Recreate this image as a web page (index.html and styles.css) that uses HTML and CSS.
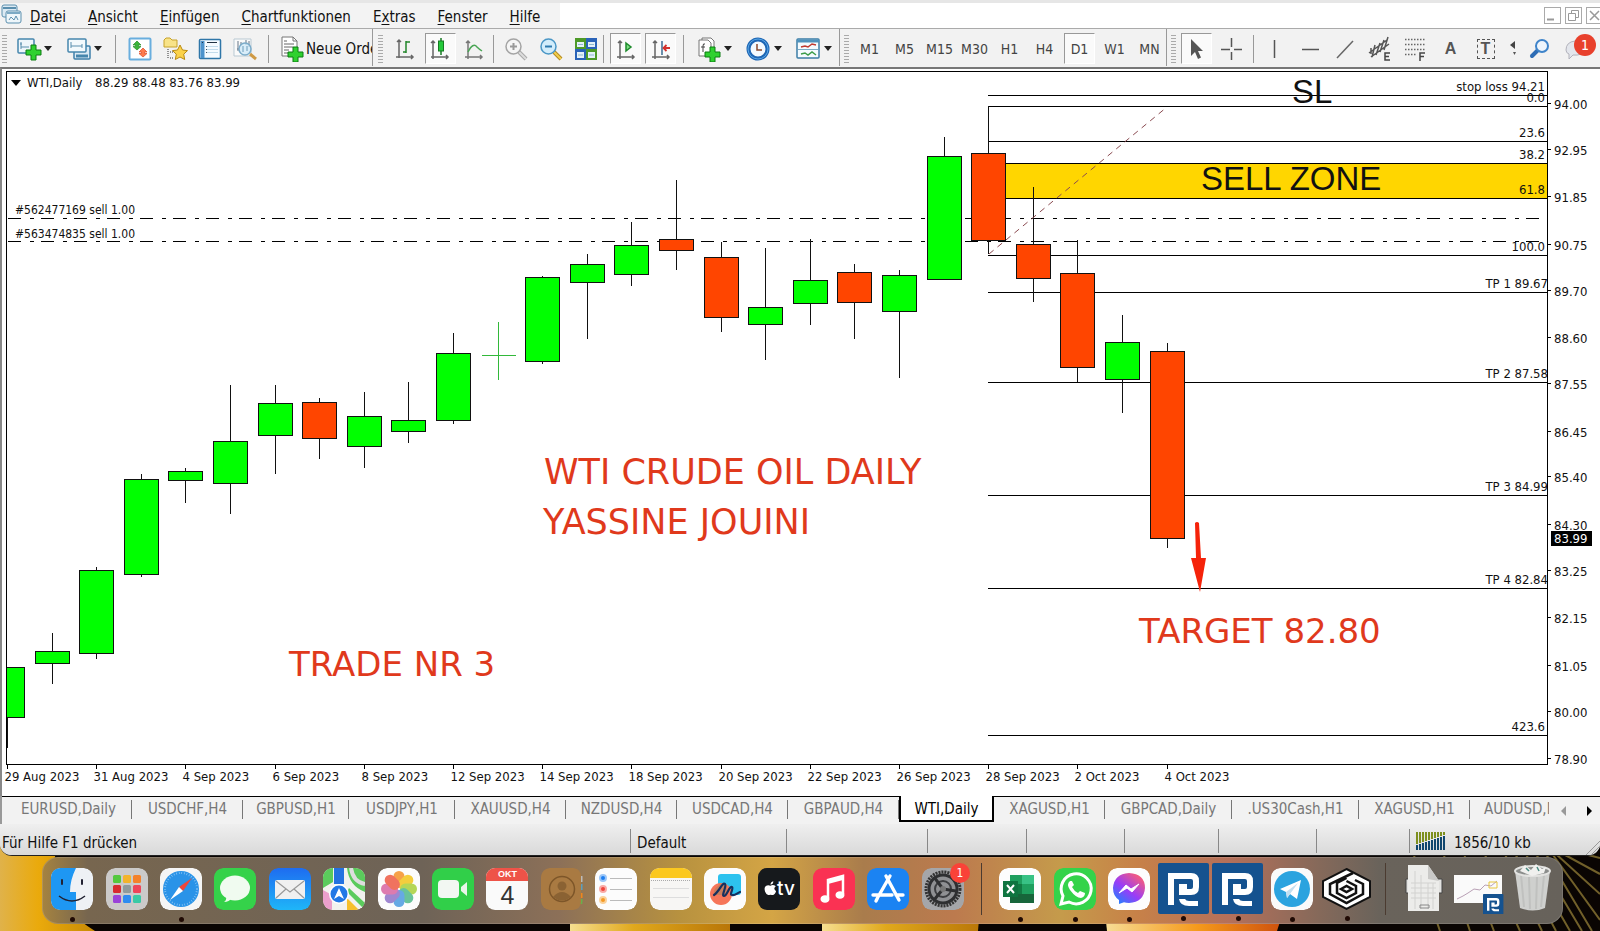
FILE: index.html
```html
<!DOCTYPE html>
<html lang="de">
<head>
  <meta charset="UTF-8" />
  <meta name="viewport" content="width=device-width, initial-scale=1.0"/>
  <title>WTI,Daily</title>
  <link rel="stylesheet" href="styles.css">
</head>
<body>

<div class="window">

  <!-- Menu -->
  <header class="menubar">
    <nav class="menu">
      <svg class="app-icon" width="22" height="22" viewBox="0 0 22 22"><rect x="2" y="1" width="15" height="12" rx="2" fill="#dceaf3" stroke="#5b8fae"/><path d="M3 4h13" stroke="#5b8fae" stroke-width="2"/><rect x="6" y="7" width="15" height="12" rx="2" fill="#eef6fa" stroke="#5b8fae"/><path d="M7 9h13" stroke="#7ba9c4" stroke-width="2"/><path d="M9 16l2-3 3 3 2-4 2 4" fill="none" stroke="#5b8fae"/></svg>
      <a href="#"><u>D</u>atei</a>
      <a href="#"><u>A</u>nsicht</a>
      <a href="#"><u>E</u>infügen</a>
      <a href="#"><u>C</u>hartfunktionen</a>
      <a href="#">E<u>x</u>tras</a>
      <a href="#"><u>F</u>enster</a>
      <a href="#"><u>H</u>ilfe</a>
    </nav>
    <div class="win-buttons">
      <button aria-label="Minimieren"><svg width="17" height="17"><path d="M3 12.500h7" stroke="#999" stroke-width="2"/></svg></button>
      <button aria-label="Wiederherstellen"><svg width="17" height="17" fill="none" stroke="#999"><path d="M3.500 6.500h7v7h-7zM6.500 6V3.500h7v7H11"/></svg></button>
      <button aria-label="Schließen"><svg width="17" height="17"><path d="M4 4l9 9M13 4l-9 9" stroke="#999" stroke-width="1.500"/></svg></button>
    </div>
  </header>

  <!-- Toolbars -->
  <div class="toolbar">
    <div class="group group-standard">
      <i class="grip"></i>
      <button class="tool drop" aria-label="Neuer Chart"><svg width="26" height="24" viewBox="0 0 26 24"><rect x="2" y="2" width="16" height="14" rx="1" fill="#eef6fb" stroke="#4686ad" stroke-width="1.500"/><path d="M5 5v7M4 7h2M5 10h8" stroke="#5b8fae"/><path d="M15 8h5v5h5v5h-5v5h-5v-5h-5v-5h5z" fill="#2fd12f" stroke="#0d7d12"/></svg></button>
      <button class="tool drop" aria-label="Profile"><svg width="26" height="24" viewBox="0 0 26 24"><rect x="8" y="9" width="16" height="13" rx="1" fill="#dbeaf5" stroke="#3f80aa" stroke-width="1.500"/><path d="M10 19h12" stroke="#4686ad" stroke-width="3"/><rect x="2" y="2" width="18" height="13" rx="1" fill="#f4fafd" stroke="#4686ad" stroke-width="1.500"/><path d="M5 5v6M5 9h11M16 7v4" stroke="#5b8fae"/></svg></button>
      <i class="sep"></i>
      <button class="tool" aria-label="Marktübersicht"><svg width="24" height="24" viewBox="0 0 24 24"><rect x="1.500" y="1.500" width="21" height="21" rx="1" fill="#fff" stroke="#69aede" stroke-width="2"/><path d="M9 4l4 4h-2.500v1.500H13l-4 3.500-4-3.500h2.500V8H5z" fill="#3bb53b" stroke="#2b8d2b" stroke-width=".7"/><path d="M15 11l4 4h-2.500v1.500H19L15 20l-4-3.500h2.500V15H11z" fill="#ff7b4c" stroke="#dd4a26" stroke-width=".7"/></svg></button>
      <button class="tool" aria-label="Navigator"><svg width="26" height="24" viewBox="0 0 26 24"><path d="M2 3l2-2h4l2 2h5v7H2z" fill="#f8e388" stroke="#c7a22a"/><path d="M6 12v10M8 15h4M8 21h3" stroke="#333" stroke-dasharray="1 1"/><path d="M18 8l2.500 5 5 .6-3.800 3.600 1 5.300L18 20l-4.700 2.500 1-5.300-3.800-3.600 5-.6z" fill="#fbd24a" stroke="#b98a12"/></svg></button>
      <button class="tool" aria-label="Datenfenster"><svg width="24" height="24" viewBox="0 0 24 24"><rect x="1.500" y="2.500" width="21" height="19" rx="1" fill="#f6fbff" stroke="#2f76a8" stroke-width="1.500"/><path d="M4.500 4v17" stroke="#4d93cc" stroke-width="4"/><path d="M4 5.500h1M9 5.500h10" stroke="#234"/><path d="M9 9.500h11M9 12.500h11M9 15.500h11" stroke="#c3dcec"/><path d="M8.500 9v8" stroke="#456" stroke-dasharray="1 2"/></svg></button>
      <button class="tool" aria-label="Strategietester"><svg width="26" height="24" viewBox="0 0 26 24"><path d="M2 2h17v17H2z" fill="#fafafa" stroke="#b9c9d3"/><path d="M6 4v10M9 5v4M14 3v5M17 4v6M5 12h2" stroke="#678"/><path d="M18 17l6 5" stroke="#cf9a45" stroke-width="3"/><circle cx="13" cy="12" r="6" fill="#cde8f8bb" stroke="#7cacca" stroke-width="1.500"/><path d="M11 9v6M15 9v5" stroke="#6d9cba"/></svg></button>
      <i class="sep"></i>
      <button class="tool order"><svg width="26" height="26" viewBox="0 0 26 26"><path d="M3 1h11l4 4v15H3z" fill="#fff" stroke="#777"/><path d="M5 5h3M5 8h10M5 11h9M5 14h5M5 17h5" stroke="#666"/><path d="M14 1v4h4" fill="none" stroke="#777"/><path d="M14 11h5v5h5v5h-5v5h-5v-5H9v-5h5z" fill="#2fd12f" stroke="#0d7d12"/></svg>Neue Order</button>
    </div>

    <div class="group group-charts">
      <i class="grip"></i>
      <button class="tool" aria-label="Balkenchart"><svg width="24" height="24" viewBox="0 0 24 24"><path d="M5 3v18M2 20h17M3 5l2-2 2 2M17 18l2 2-2 2" fill="none" stroke="#666" stroke-width="1.500"/><path d="M12 4v12M12 5h4M9 15h3" stroke="#23862b" stroke-width="1.500" fill="none"/></svg></button>
      <button class="tool pressed" aria-label="Kerzenchart"><svg width="24" height="24" viewBox="0 0 24 24"><path d="M4 4v18M2 20h17M2 6l2-2 2 2M17 18l2 2-2 2" fill="none" stroke="#666" stroke-width="1.500"/><path d="M12 1v17" stroke="#167a22" stroke-width="1.500"/><rect x="9.500" y="4" width="5" height="10" fill="#24c93a" stroke="#167a22"/></svg></button>
      <button class="tool" aria-label="Linienchart"><svg width="24" height="24" viewBox="0 0 24 24"><path d="M4 4v18M1 20h17M2 6l2-2 2 2M16 18l2 2-2 2" fill="none" stroke="#777" stroke-width="1.500"/><path d="M4 15q5-10 9-5 2 2 5 4" fill="none" stroke="#49a554" stroke-width="1.500"/></svg></button>
      <i class="sep thin"></i>
      <button class="tool" aria-label="Vergrößern"><svg width="24" height="24" viewBox="0 0 24 24"><path d="M15 15l7 7" stroke="#aaa" stroke-width="4"/><path d="M15 15l7 7" stroke="#ddd" stroke-width="2"/><circle cx="9.500" cy="9.500" r="7.500" fill="#f5f5f5" stroke="#a4a4a4" stroke-width="1.500"/><path d="M9.500 6v7M6 9.500h7" stroke="#999" stroke-width="2"/></svg></button>
      <button class="tool" aria-label="Verkleinern"><svg width="24" height="24" viewBox="0 0 24 24"><path d="M15 15l7 7" stroke="#b58a20" stroke-width="4"/><path d="M15 15l7 7" stroke="#f3cf4c" stroke-width="2"/><circle cx="9.500" cy="9.500" r="7.500" fill="#d3edfb" stroke="#4b97c6" stroke-width="1.500"/><path d="M6 9.500h7" stroke="#2f7aae" stroke-width="2"/></svg></button>
      <button class="tool" aria-label="Fenster anordnen"><svg width="24" height="24" viewBox="0 0 24 24"><path d="M1 1h11v11H1z" fill="#4d9a28"/><path d="M12 1h11v11H12z" fill="#2a63b8"/><path d="M1 12h11v11H1z" fill="#2a63b8"/><path d="M12 12h11v11H12z" fill="#4d9a28"/><path d="M3 5h7v5H3zM14 5h7v5h-7zM3 15h7v6H3zM14 15h7v6h-7z" fill="#e4f1f8"/><path d="M4 7.500h5M15 7.500h5M4 18h5M15 18h5" stroke="#8fb9cf"/></svg></button>
      <i class="sep thin"></i>
      <button class="tool pressed" aria-label="Auto-Bildlauf"><svg width="24" height="24" viewBox="0 0 24 24"><path d="M6 4v18M3 20h17M4 6l2-2 2 2M18 18l2 2-2 2" fill="none" stroke="#666" stroke-width="1.500"/><path d="M12 6l5 4-5 4z" fill="#7ddf83" stroke="#1d8a2b" stroke-width="1.500"/></svg></button>
      <button class="tool pressed" aria-label="Chartverschiebung"><svg width="24" height="24" viewBox="0 0 24 24"><path d="M6 4v18M3 20h17M4 6l2-2 2 2M18 18l2 2-2 2" fill="none" stroke="#666" stroke-width="1.500"/><path d="M13 4v14" stroke="#3a6a90" stroke-width="1.500"/><path d="M14 11h7M17.500 8L14.500 11l3 3" fill="none" stroke="#d3302b" stroke-width="1.800"/></svg></button>
      <i class="sep wide"></i>
      <button class="tool drop" aria-label="Indikatoren"><svg width="26" height="26" viewBox="0 0 26 26"><path d="M6 2h9l3 3v13H6z" fill="#fff" stroke="#777"/><path d="M3 4h9l3 3v13H3z" fill="#fff" stroke="#777"/><path d="M9 8q-2-1-2 2v6M5 11h4" fill="none" stroke="#444"/><path d="M14 11h5v5h5v5h-5v5h-5v-5H9v-5h5z" fill="#2fd12f" stroke="#0d7d12"/></svg></button>
      <button class="tool drop" aria-label="Zeitrahmen"><svg width="26" height="26" viewBox="0 0 26 26"><circle cx="12" cy="13" r="9.500" fill="#f4fafe" stroke="#1f67b5" stroke-width="4"/><circle cx="12" cy="13" r="10" fill="none" stroke="#5aa8e6"/><path d="M11 8v6h5" fill="none" stroke="#8a4a2d" stroke-width="1.500"/></svg></button>
      <button class="tool drop" aria-label="Vorlagen"><svg width="26" height="24" viewBox="0 0 26 24"><rect x="1" y="2" width="22" height="19" rx="1" fill="#f4fbff" stroke="#3c7ea7" stroke-width="1.500"/><path d="M1 4h22" stroke="#4f92bd" stroke-width="3"/><path d="M5 10l4-1 3 1 4-3 4 1" fill="none" stroke="#c03a30" stroke-width="1.500"/><path d="M2 12.500h20" stroke="#7bacc7"/><path d="M5 17l4-1 3 2 4-3 4 3" fill="none" stroke="#3d9d4a" stroke-width="1.500"/></svg></button>
    </div>

    <div class="group group-periods">
      <i class="grip"></i>
      <button class="tool">M1</button>
      <button class="tool">M5</button>
      <button class="tool">M15</button>
      <button class="tool">M30</button>
      <button class="tool">H1</button>
      <button class="tool">H4</button>
      <button class="tool pressed">D1</button>
      <button class="tool">W1</button>
      <button class="tool">MN</button>
    </div>

    <div class="group group-lines">
      <i class="grip"></i>
      <button class="tool pressed" aria-label="Cursor"><svg width="24" height="24" viewBox="0 0 24 24"><path d="M6 2v17l4-4 3 7 3-1.500-3-6.500h5z" fill="#555"/></svg></button>
      <button class="tool" aria-label="Fadenkreuz"><svg width="24" height="24" viewBox="0 0 24 24"><path d="M11.500 1v9M11.500 15v8M1 12.500h9M14 12.500h8" stroke="#555" stroke-width="1.500"/></svg></button>
      <i class="sep"></i>
      <button class="tool" aria-label="Vertikale Linie"><svg width="24" height="24" viewBox="0 0 24 24"><path d="M10.500 3v18" stroke="#555" stroke-width="1.500"/></svg></button>
      <button class="tool" aria-label="Horizontale Linie"><svg width="24" height="24" viewBox="0 0 24 24"><path d="M3 12.500h17" stroke="#555" stroke-width="1.500"/></svg></button>
      <button class="tool" aria-label="Trendlinie"><svg width="24" height="24" viewBox="0 0 24 24"><path d="M3 21L19 4" stroke="#666" stroke-width="1.500"/></svg></button>
      <button class="tool" aria-label="Kanal"><svg width="26" height="26" viewBox="0 0 26 26"><path d="M1 17L19 4M3 21L21 8M3 12v6M7 9l-3 12M12 7L8 19M16 4l-4 12M20 1l-4 13" stroke="#555" stroke-width="1.500"/><path d="M22 17h-5v7h5M17 20.500h4" fill="none" stroke="#444" stroke-width="1.500"/></svg></button>
      <button class="tool" aria-label="Fibonacci"><svg width="26" height="26" viewBox="0 0 26 26"><path d="M2 3.500h20M2 8.500h20M2 13.500h20M2 18.500h12" stroke="#666" stroke-width="1.500" stroke-dasharray="1.500 1.500"/><path d="M22 17h-5v8M17 20.500h4" fill="none" stroke="#444" stroke-width="1.500"/></svg></button>
      <button class="tool letter">A</button>
      <button class="tool letter boxed"><span>T</span></button>
      <button class="tool tiny" aria-label="Pfeile"><svg width="10" height="16" viewBox="0 0 10 16"><path d="M7 0v8L2 4z" fill="#444"/><path d="M5 11h3l-1.500 3z" fill="#555"/></svg></button>
      <button class="tool" aria-label="Suche"><svg width="24" height="24" viewBox="0 0 24 24"><path d="M9 13l-6 6" stroke="#2e6db5" stroke-width="4" stroke-linecap="round"/><circle cx="13" cy="9" r="6" fill="#eef5fc" stroke="#3f84ca" stroke-width="2"/></svg></button>
      <button class="tool alert" aria-label="Mitteilungen"><svg width="24" height="24" viewBox="0 0 24 24"><path d="M2 13q0-8 9-9 8 1 10 9-3 6-12 5l-4 4v-5q-3-1-3-4z" fill="#e3e6ec" stroke="#b2b2bb"/></svg><span class="badge">1</span></button>
    </div>
  </div>

  <!-- Chart -->
  <main class="chart">
    <svg id="chart" viewBox="0 69 1600 727">
      <g id="zone"></g>
      <g id="levels"></g>
      <g id="candles"></g>
      <path class="trend" d="M989 254L1167 107"/>
      <g class="frame">
        <path d="M6.500 764.500V71.500H1547.500V764.500Z"/>
      </g>
      <g id="axis"></g>

      <path d="M11 80h10l-5 6z"/>
      <text x="27" y="87">WTI,Daily</text>
      <text x="95" y="87">88.29 88.48 83.76 83.99</text>
      <text class="order-label" x="15" y="214">#562477169 sell 1.00</text>
      <text class="order-label" x="15" y="238">#563474835 sell 1.00</text>

      <text class="label" x="1292" y="103">SL</text>
      <text class="label" x="1201" y="190">SELL ZONE</text>

      <g class="note">
        <text x="544" y="484">WTI CRUDE OIL DAILY</text>
        <text x="543" y="534">YASSINE JOUINI</text>
        <text class="small" x="289" y="676">TRADE NR 3</text>
        <text class="small" x="1139" y="643">TARGET 82.80</text>
        <path d="M1195 523q2-2 4 0l2 35h5l-6 34-9-34h5z"/>
      </g>
    </svg>
  </main>

  <!-- Chart tabs -->
  <nav class="tabs">
    <div class="tab-list">
      <a href="#" class="l">EURUSD,Daily</a>
      <a href="#">USDCHF,H4</a>
      <a href="#" class="s">GBPUSD,H1</a>
      <a href="#" class="s">USDJPY,H1</a>
      <a href="#">XAUUSD,H4</a>
      <a href="#">NZDUSD,H4</a>
      <a href="#">USDCAD,H4</a>
      <a href="#">GBPAUD,H4</a>
      <a href="#" class="active">WTI,Daily</a>
      <a href="#">XAGUSD,H1</a>
      <a href="#" class="l">GBPCAD,Daily</a>
      <a href="#" class="l">.US30Cash,H1</a>
      <a href="#">XAGUSD,H1</a>
      <a href="#" class="last">AUDUSD,M</a>
    </div>
    <button class="scroll off" aria-label="Zurück"></button>
    <button class="scroll" aria-label="Weiter"></button>
  </nav>

  <!-- Status bar -->
  <footer class="status">
    <span>Für Hilfe F1 drücken</span>
    <span>Default</span>
    <span></span><span></span><span></span><span></span><span></span><span></span>
    <span class="traffic"><svg id="bars" width="32" height="20"></svg>1856/10 kb</span>
    <svg class="resize" width="14" height="14"><path d="M0 14L14 0M5 14l9-9M10 14l4-4" stroke="#999"/></svg>
  </footer>
</div>

<!-- Desktop with dock -->
<div class="desktop">
  <svg class="wallpaper" viewBox="0 0 1600 87" preserveAspectRatio="none">
    <defs>
      <linearGradient id="gold"><stop offset="0" stop-color="#f6df90"/><stop offset=".4" stop-color="#e0a81c"/><stop offset="1" stop-color="#b97608"/></linearGradient>
      <linearGradient id="fire"><stop offset="0" stop-color="#f7df9a"/><stop offset=".5" stop-color="#f59a1c"/><stop offset="1" stop-color="#c9480c"/></linearGradient>
      <linearGradient id="left"><stop offset="0" stop-color="#e0b24a"/><stop offset=".4" stop-color="#eaaa0c"/><stop offset="1" stop-color="#c88a06"/></linearGradient>
    </defs>
    <rect width="1600" height="87" fill="#0a0503"/>
    <path d="M0 0h60q-25 50 35 87H0z" fill="url(#left)"/>
    <path d="M570 40h160v47H570z" fill="url(#gold)"/>
    <path d="M822 87V40h160l-4 47z" fill="url(#gold)"/>
    <path d="M1107 87l-5-47h190l-15 47z" fill="url(#fire)"/>
    <g stroke="#71602a" stroke-width="2">
      <path d="M1545 0l55 14M1545 0l55 30M1545 0l55 50M1545 0l55 76M1540 0l52 87M1530 0l52 87M1520 0l50 87M1510 0l46 87M1500 0l42 87M1480 0l40 87M1460 0l34 87M1440 0l30 87M1410 0l30 87"/>
    </g>
  </svg>
  <div class="dock">
    <a class="app open" href="#" aria-label="Finder"><svg viewBox="0 0 42 42"><rect width="42" height="42" rx="9" fill="#eef1f5"/><path d="M9 0h16q-6 12-6 24h6v18H9q-9 0-9-9V9q0-9 9-9z" fill="#1e97f3"/><path d="M11 12v4M31 12v4" stroke="#223" stroke-width="2" stroke-linecap="round"/><path d="M8 28q13 10 26 0" fill="none" stroke="#223" stroke-width="1.500"/></svg></a>
    <a class="app" href="#" aria-label="Launchpad"><svg viewBox="0 0 42 42"><rect width="42" height="42" rx="9" fill="#cbcac9"/><rect x="7" y="7" width="8" height="8" rx="1.500" fill="#54c83e"/><rect x="17" y="7" width="8" height="8" rx="1.500" fill="#f3b32b"/><rect x="27" y="7" width="8" height="8" rx="1.500" fill="#f4812a"/><rect x="7" y="17" width="8" height="8" rx="1.500" fill="#d82a31"/><rect x="17" y="17" width="8" height="8" rx="1.500" fill="#8f9a9b"/><rect x="27" y="17" width="8" height="8" rx="1.500" fill="#ee4459"/><rect x="7" y="27" width="8" height="8" rx="1.500" fill="#9a43d8"/><rect x="17" y="27" width="8" height="8" rx="1.500" fill="#2e8cf0"/><rect x="27" y="27" width="8" height="8" rx="1.500" fill="#39c9a5"/></svg></a>
    <a class="app open" href="#" aria-label="Safari"><svg viewBox="0 0 42 42"><rect width="42" height="42" rx="9" fill="#f5f5f5"/><circle cx="21" cy="21" r="18" fill="#2a93e8"/><circle cx="21" cy="21" r="16" fill="none" stroke="#9fd0f6" stroke-width="2" stroke-dasharray=".6 2"/><path d="M32 10L23 23l-4-4z" fill="#f0453a"/><path d="M10 32l9-13 4 4z" fill="#fff"/></svg></a>
    <a class="app" href="#" aria-label="Nachrichten"><svg viewBox="0 0 42 42"><rect width="42" height="42" rx="9" fill="#35d24a"/><ellipse cx="21" cy="20" rx="15" ry="12.500" fill="#f0fbf0"/><path d="M12 28q1 4-2 6 5 0 8-4z" fill="#f0fbf0"/></svg></a>
    <a class="app" href="#" aria-label="Mail"><svg viewBox="0 0 42 42"><defs><linearGradient id="mail" x2="0" y2="1"><stop offset="0" stop-color="#1e6cf0"/><stop offset="1" stop-color="#1fb6f8"/></linearGradient></defs><rect width="42" height="42" rx="9" fill="url(#mail)"/><rect x="6" y="12" width="30" height="19" rx="2" fill="#f0f0f0"/><path d="M7 13l14 11 14-11M7 30l10-9M35 30l-10-9" fill="none" stroke="#999" stroke-width="1.200"/></svg></a>
    <a class="app" href="#" aria-label="Karten"><svg viewBox="0 0 42 42"><defs><clipPath id="r"><rect width="42" height="42" rx="9"/></clipPath></defs><g clip-path="url(#r)"><path d="M0 0h42v42H0z" fill="#f2f2ee"/><path d="M0 0h10v14L0 20zM24 0h18v24Q26 18 24 0z" fill="#5bcb5c"/><path d="M28 0q2 14 14 16" fill="none" stroke="#ddd" stroke-width="4"/><path d="M0 22l9 5v15H0z" fill="#eb9fcb"/><path d="M24 30l12 12H24z" fill="#f6bf2c"/><path d="M26 20l16 15v7l-18-18z" fill="#5bcb5c"/><path d="M11 0h10v16H11z" fill="#2472e0"/><circle cx="16" cy="26" r="10" fill="#fff"/><circle cx="16" cy="26" r="8.500" fill="#2378e6"/><path d="M16 20l5 11-5-3-5 3z" fill="#fff"/></g></svg></a>
    <a class="app" href="#" aria-label="Fotos"><svg viewBox="0 0 42 42"><rect width="42" height="42" rx="9" fill="#fcfcfc"/><g id="petals" opacity=".85"></g></svg></a>
    <a class="app" href="#" aria-label="FaceTime"><svg viewBox="0 0 42 42"><rect width="42" height="42" rx="9" fill="#31cf49"/><rect x="6" y="12" width="21" height="18" rx="4" fill="#f2f7f2"/><path d="M29 19l6-5v14l-6-5z" fill="#e9f5e9"/></svg></a>
    <a class="app" href="#" aria-label="Kalender"><span class="calendar"><b>OKT</b>4</span></a>
    <a class="app" href="#" aria-label="Kontakte"><svg viewBox="0 0 42 42"><path d="M40 8v6" stroke="#bbb" stroke-width="3"/><path d="M40 16v6" stroke="#5a9fc0" stroke-width="3"/><path d="M40 25v5" stroke="#f0861c" stroke-width="3"/><path d="M40 31v5" stroke="#68b04c" stroke-width="3"/><rect width="40" height="42" rx="8" fill="#a97a42"/><circle cx="21" cy="21" r="12.500" fill="none" stroke="#7d5629" stroke-width="1.500"/><circle cx="21" cy="18" r="4.500" fill="#8a6233"/><path d="M12 29q9-10 18 0-9 7-18 0z" fill="#8a6233"/></svg></a>
    <a class="app" href="#" aria-label="Erinnerungen"><svg viewBox="0 0 42 42"><rect width="42" height="42" rx="9" fill="#fcfcfc"/><g stroke-width="2" fill="none"><circle cx="8" cy="10" r="3" fill="#1d7ef0" stroke="#9cc6f7"/><circle cx="8" cy="21" r="3" fill="#f0443c" stroke="#f9aaa5"/><circle cx="8" cy="32" r="3" fill="#f59a23" stroke="#fad29c"/></g><path d="M15 10.500h22M15 21.500h22M15 32.500h22" stroke="#bbb"/></svg></a>
    <a class="app" href="#" aria-label="Notizen"><svg viewBox="0 0 42 42"><rect width="42" height="42" rx="9" fill="#f7f6f4"/><path d="M9 0h24q9 0 9 10H0Q0 0 9 0z" fill="#fbc81f"/><path d="M1 12.500h40" stroke="#aaa" stroke-dasharray="1 1"/><path d="M3 20.500h36M3 29.500h36" stroke="#ddd"/></svg></a>
    <a class="app" href="#" aria-label="Freeform"><svg viewBox="0 0 42 42"><rect width="42" height="42" rx="9" fill="#fcfcfc"/><rect x="14" y="6" width="23" height="21" rx="3" fill="#2dc2ee"/><circle cx="17" cy="26" r="11" fill="#f6765a"/><path d="M14 18q6-6 9-1v10H10q-1-6 4-9z" fill="#c97d5c"/><path d="M10 27c6-4 8-13 11-11 2 2-4 12-1 12 3 0 5-10 8-9 2 1-3 8 0 8 3 1 5-2 8-3" fill="none" stroke="#16305e" stroke-width="2.200" stroke-linecap="round"/></svg></a>
    <a class="app" href="#" aria-label="Apple TV"><span class="tv"><svg viewBox="0 0 14 16"><path d="M7 5q2-1.500 4-.5 1 .4 1.600 1.300-3.200 2.200.4 5.200-1.800 5-4.500 3.900-1.500-.6-3 0Q3 15.900 1.200 11.500-.3 7 2 5.200 4.300 3.700 7 5zM7 4q0-3 3-3.800Q10.200 3.500 7 4z" fill="#fff"/></svg>tv</span></a>
    <a class="app" href="#" aria-label="Musik"><svg viewBox="0 0 42 42"><rect width="42" height="42" rx="9" fill="#fa3253"/><path d="M15 30V12l15-4v18" fill="none" stroke="#fff" stroke-width="2.500"/><path d="M15 12l15-4v4l-15 4z" fill="#fff"/><ellipse cx="12" cy="31" rx="4.500" ry="3.800" fill="#fff"/><ellipse cx="27" cy="27" rx="4.500" ry="3.800" fill="#fff"/></svg></a>
    <a class="app" href="#" aria-label="App Store"><svg viewBox="0 0 42 42"><rect width="42" height="42" rx="9" fill="#1b83f2"/><path d="M23 8L11 29M19 8l13 24M6 27h19M29 27h7M9 33l1.500-3" stroke="#fff" stroke-width="3.400" stroke-linecap="round"/></svg></a>
    <a class="app" href="#" aria-label="Einstellungen"><svg viewBox="0 0 42 42"><rect width="42" height="42" rx="9" fill="#a5a6a9"/><circle cx="21" cy="21" r="17" fill="none" stroke="#333" stroke-width="3" stroke-dasharray="2 1"/><circle cx="21" cy="21" r="14" fill="#8f9093" stroke="#2e2f31" stroke-width="3"/><circle cx="21" cy="21" r="8" fill="none" stroke="#3c3d40" stroke-width="2"/><path d="M21 21l13 2M21 21L12 9M21 21l-9 11" stroke="#2e2f31" stroke-width="3"/><circle cx="21" cy="21" r="3" fill="#777"/></svg><span class="badge">1</span></a>
    <i class="divider"></i>
    <a class="app open" href="#" aria-label="Excel"><svg viewBox="0 0 42 42"><rect width="42" height="42" rx="9" fill="#fdfdfd"/><path d="M11 7h24v28H11z" fill="#1f9f5e"/><path d="M23 7h12v9H23z" fill="#38c285"/><path d="M11 16h12v10H11z" fill="#127a43"/><path d="M11 26h24v9H11z" fill="#17653a"/><path d="M4 13h15v16H4z" fill="#0f7440"/><path d="M8 17l7 8M15 17l-7 8" stroke="#fff" stroke-width="2"/></svg></a>
    <a class="app open" href="#" aria-label="WhatsApp"><svg viewBox="0 0 42 42"><rect width="42" height="42" rx="9" fill="#34d34a"/><path d="M7 36l2-8a15 15 0 1 1 6 6z" fill="none" stroke="#fff" stroke-width="3"/><path d="M16 13q-4 3 0 9 6 8 11 8 4-1 4-5l-5-2-2 2q-4-2-6-6l2-2-2-4z" fill="#fff"/></svg></a>
    <a class="app open" href="#" aria-label="Messenger"><svg viewBox="0 0 42 42"><defs><linearGradient id="msg" x1="0" y1="1" x2=".8" y2="0"><stop offset="0" stop-color="#0a8dff"/><stop offset=".5" stop-color="#9a3cf7"/><stop offset="1" stop-color="#ff5f70"/></linearGradient></defs><rect width="42" height="42" rx="9" fill="#fdfdfd"/><path d="M21 5q16 1 16 15-1 14-16 15-3 0-5-.8L11 36v-4q-6-4-6-12Q6 6 21 5z" fill="url(#msg)"/><path d="M11 25l7-8 5 4 8-5-7 8-5-4z" fill="#fff" stroke="#fff" stroke-linejoin="round"/></svg></a>
    <a class="app open big" href="#" aria-label="Terminal 1"><svg viewBox="0 0 51 51"><use href="#plogo"/></svg></a>
    <a class="app open big" href="#" aria-label="Terminal 2"><svg viewBox="0 0 51 51"><g id="plogo"><rect width="51" height="51" rx="2" fill="#15528f"/><path d="M10 10h23q8 0 8 8v6q0 8-8 8H21V21h8v5h4q2 0 2-2v-6q0-2-2-2H16v26h-6z" fill="#fff"/><path d="M21 36h6q1 2 4 2h9v5H31q-9 0-10-7z" fill="#fff"/></g></svg></a>
    <a class="app open" href="#" aria-label="Telegram"><svg viewBox="0 0 42 42"><rect width="42" height="42" rx="9" fill="#fafafa"/><circle cx="21" cy="21" r="18" fill="#2ba3df"/><path d="M9 21l21-9-4 19-7-5-3 4-1-6z" fill="#fff"/><path d="M15 24l12-9-8 11-3 4z" fill="#c3dff0"/></svg></a>
    <a class="app open big" href="#" aria-label="Trading"><svg viewBox="0 0 51 51"><path d="M25.500 6L49 18v16L25.500 46 2 34V18z" fill="#fff" stroke="#111" stroke-width="2"/><g fill="none" stroke="#111" stroke-width="2.500"><path d="M32 10L9 21v10l16.500 9L42 31V21l-8-4"/><path d="M25.500 15L16 20v10l9.500 5 9.500-5v-7l-9.500-5"/><path d="M20 26l5.500-3 5.500 3-5.500 3z"/></g></svg></a>
    <i class="divider"></i>
    <a class="app big" href="#" aria-label="Dokumente"><svg viewBox="0 0 51 51"><path d="M8 16h36v14H8z" fill="#e2e2e0" stroke="#444"/><path d="M10 2h20l11 16v30H10z" fill="#ececea"/><path d="M30 2v14l11 2z" fill="#c9c9c7"/><path d="M13 20h25M13 25h25M13 30h25M13 35h25M17 8v38M23 12v34M30 20v26M35 20v26" stroke="#d2d2d0"/><path d="M22 42h9v3h-9z" fill="none" stroke="#888"/></svg></a>
    <a class="app big" href="#" aria-label="Vorschau"><svg viewBox="0 0 51 51"><path d="M1 12h48v28H1z" fill="#fafafa"/><path d="M4 36l6-3 5-3 6-4 6 1 5-5 6 1 6-5" fill="none" stroke="#b9a0b5"/><path d="M36 19h8v6h-8z" fill="none" stroke="#e8c63c"/><g transform="translate(30 31) scale(.4)"><use href="#plogo"/></g></svg></a>
    <a class="app big" href="#" aria-label="Papierkorb"><svg viewBox="0 0 51 51"><path d="M8 8h35l-5 37q-12 5-25 0z" fill="#cfd0ce"/><path d="M14 12l3 32M37 12l-3 32M22 14l1 32M30 14l-1 32" stroke="#c0c1bf" stroke-width="2"/><ellipse cx="25.500" cy="8" rx="17.500" ry="5" fill="#8b8d8b" stroke="#e2e2e0" stroke-width="2"/><path d="M13 8l5-6 6 5 5-6 6 5 4-2-2 6-12 3z" fill="#f0f0ee"/><path d="M19 5l3 3M30 4l2 4" stroke="#4b8b82" stroke-width="1.500"/></svg></a>
  </div>
</div>

<script src="script.js"></script>
</body>
</html>
```
FILE: styles.css
```css
* { margin: 0; padding: 0; box-sizing: border-box; }

body {
  min-height: 100vh;
  display: flex;
  flex-direction: column;
  background: #0a0503;
  font-family: "DejaVu Sans Condensed", "DejaVu Sans", Tahoma, sans-serif;
  font-size: 15px;
  color: #111;
  overflow-x: hidden;
}

a { color: inherit; text-decoration: none; }
button { font: inherit; color: inherit; border: none; background: none; }

.window {
  position: relative;
  z-index: 1;
  background: #f2f2f2;
  border-radius: 0 0 12px 12px;
  border-bottom: 1px solid #222;
  overflow: hidden;
}

/* Menu */
.menubar {
  display: flex;
  justify-content: space-between;
  height: 29px;
  border-top: 3px solid #e6e6e6;
  border-bottom: 1px solid #aaa;
  background: #fff;
}

.menu {
  display: flex;
  align-items: center;
  gap: 22px;
  padding: 2px 20px 0 0;
  background: #f3f3f3;
}

.menu u { text-underline-offset: 2px; }
.app-icon { margin: -4px -14px 0 0; }

.win-buttons {
  display: flex;
  align-items: center;
  gap: 4px;
  margin-right: -3px;
}

.win-buttons button {
  width: 17px;
  height: 17px;
  outline: 1px solid #aaa;
  outline-offset: -1px;
}

.win-buttons svg { display: block; }

/* Toolbars */
.toolbar {
  display: flex;
  height: 37px;
  background: #f2f2f2;
}

.group {
  display: flex;
  align-items: center;
  flex: none;
  padding-top: 2px;
  overflow: hidden;
  border-right: 1px solid #999;
}

.group-standard { width: 373px; }
.group-charts { width: 467px; }
.group-periods { width: 327px; font-size: 14px; }
.group-lines { flex: 1; border-right: none; }

.grip {
  flex: none;
  width: 12px;
  height: 28px;
  background: repeating-linear-gradient(#aaa 0 1px, #f2f2f2 1px 3px) 4px 0 / 5px 100% no-repeat;
}

.group-standard .grip { width: 9px; background-position-x: 2px; }
.group-charts .grip { width: 15px; background-position-x: 5px; }

.sep {
  flex: none;
  width: 9px;
  height: 28px;
  background: linear-gradient(#999, #999) 50% 0 / 1px 100% no-repeat;
}

.group-standard .sep { width: 13px; }
.sep.thin { width: 5px; background-position-x: 0; }
.sep.wide { width: 11px; }

.tool {
  display: flex;
  align-items: center;
  justify-content: center;
  flex: none;
  width: 35px;
  height: 31px;
  color: #444;
}

.pressed {
  background: #fafafa;
  border: 1px solid #fff;
  border-top-color: #999;
  border-left-color: #999;
  width: 31px;
  margin: 0 2px;
}

.drop { width: 50px; gap: 2px; }

.drop::after {
  content: "";
  border: 4px solid transparent;
  border-top: 5px solid #222;
  border-bottom: 0;
}

.order {
  width: auto;
  gap: 1px;
  padding-left: 4px;
  color: #111;
  white-space: nowrap;
}

.tiny { width: 20px; }
.letter { font: bold 16px "Liberation Sans", Arial, sans-serif; color: #555; }
.boxed span { width: 18px; border: 1px dashed #555; line-height: 18px; }

.alert {
  position: relative;
  width: 43px;
  justify-content: flex-start;
  padding-left: 6px;
}

.badge {
  position: absolute;
  display: flex;
  align-items: center;
  justify-content: center;
  top: 1px;
  right: 5px;
  width: 22px;
  height: 22px;
  border-radius: 50%;
  background: #e8402c;
  color: #fff;
  font-size: 14px;
}

/* Chart */
.chart {
  border-top: 2px solid #777;
  border-left: 2px solid #888;
  margin-top: 1px;
  background: #fff;
}

.chart > svg {
  display: block;
  width: calc(100% + 2px);
  margin-left: -2px;
}

.chart text { font-size: 13px; fill: #111; }
.chart .order-label { font-size: 12px; }
.chart .end { text-anchor: end; }

.frame path, .tick, .line {
  fill: none;
  stroke: #000;
  stroke-width: 1;
  shape-rendering: crispEdges;
}

.order-line { stroke-dasharray: 13 9 4 7; }
.zone { fill: #ffd600; }

.up { fill: #00ff00; }
.down { fill: #ff4500; }

.candle, .doji {
  stroke: #111;
  stroke-width: 1;
  shape-rendering: crispEdges;
}

.doji { stroke: #32b83a; }

.trend {
  fill: none;
  stroke: #8a4a50;
  stroke-dasharray: 6 5;
}

.chart .label { font: 33px "Liberation Sans", Arial, sans-serif; }
.chart .note text { font: 35px "DejaVu Sans", Verdana, sans-serif; fill: #e0391c; }
.chart .note .small { font-size: 34px; }
.note path { fill: #f5230a; }
.chart .price-now { fill: #fff; }

/* Tabs */
.tabs {
  display: flex;
  height: 28px;
  border-top: 1px solid #000;
  background: #f2f2f2;
}

.tab-list {
  display: flex;
  flex: 1;
  min-width: 0;
  margin-top: -1px;
  padding-left: 3px;
  border-left: 2px solid #999;
  overflow: hidden;
}

.tab-list a {
  position: relative;
  flex: none;
  width: 111px;
  height: 26px;
  line-height: 26px;
  text-align: center;
  white-space: nowrap;
  color: #777;
}

.tab-list a::after {
  content: "";
  position: absolute;
  right: 0;
  top: 4px;
  height: 19px;
  border-right: 1px solid #777;
}

.tab-list a.l { width: 127px; }
.tab-list a.s { width: 106px; }
.tab-list a.last { width: 88px; padding-left: 14px; text-align: left; }

.tab-list a.active {
  width: 95px;
  background: #fff;
  border: 2px solid #000;
  border-top: none;
  color: #000;
}

.tab-list a.active::after, .tab-list a:last-child::after { content: none; }

.scroll { flex: none; width: 27px; }

.scroll::after {
  content: "";
  display: block;
  width: 5px;
  margin-left: 14px;
  border: 5px solid transparent;
  border-left-color: #000;
  border-right: 0;
}

.scroll.off { width: 24px; }
.scroll.off::after { margin-left: 7px; border-left: 0; border-right: 5px solid #999; }

/* Status bar */
.status {
  position: relative;
  display: grid;
  grid-template-columns: 631fr 156fr 141fr 99fr 98fr 94fr 98fr 93fr 190fr;
  height: 31px;
  padding: 5px 0 2px;
  background: linear-gradient(#efefef, #d9d9d9);
}

.status span {
  display: flex;
  align-items: center;
  padding: 4px 0 0 6px;
  border-right: 1px solid #888;
}

.status span:first-child { padding-left: 2px; }
.status .traffic { gap: 6px; border: none; }
.traffic svg { margin-top: -4px; }
.resize { position: absolute; right: 0; bottom: 0; }

/* Dock */
.desktop {
  position: relative;
  flex: 1;
  min-height: 75px;
  padding: 1px 37px 7px 42px;
}

.wallpaper {
  position: absolute;
  left: 0;
  top: -12px;
  width: 100%;
  height: calc(100% + 12px);
}

.dock {
  position: relative;
  display: flex;
  align-items: center;
  height: 67px;
  padding: 0 3px 4px;
  border-radius: 16px;
  background: linear-gradient(90deg, #a58340 0, #77664f 3%, #6e6357 25%, #8c7058 34%, #b8923f 42%, #d4a545 48%, #a97c4c 54%, #bc7a4e 60%, #c59b4b 67%, #c78148 72%, #b5705a 78%, #85695a 84%, #69635b 88%, #67625b 100%);
  box-shadow: inset 0 0 0 1px #ffffff22;
}

.app {
  position: relative;
  display: flex;
  flex: 1;
  justify-content: center;
}

.app > svg, .calendar, .tv {
  display: block;
  width: 42px;
  height: 42px;
  border-radius: 9px;
}

.app.big > svg { width: 51px; height: 51px; margin: -5px 0; border-radius: 0; }

.app.open::after {
  content: "";
  position: absolute;
  left: 50%;
  bottom: -12px;
  width: 5px;
  height: 5px;
  margin-left: -2px;
  border-radius: 50%;
  background: #200a04;
}

.app .badge {
  top: -5px;
  right: 0;
  width: 20px;
  height: 20px;
  background: #fa4238;
  font-size: 12px;
}

.calendar {
  overflow: hidden;
  background: #fafafa;
  font: 25px/28px "Liberation Sans", Arial, sans-serif;
  text-align: center;
  color: #333;
}

.calendar b {
  display: block;
  background: #ee5348;
  color: #fff;
  font-size: 9px;
  line-height: 13px;
}

.tv {
  display: flex;
  align-items: center;
  justify-content: center;
  background: #16191c;
  color: #fff;
  font: 500 19px "Inter", sans-serif;
}

.tv svg { width: 13px; height: 15px; }

.divider {
  flex: none;
  width: 23px;
  height: 52px;
  background: linear-gradient(#4b3b30, #4b3b30) 50% 0 / 1px 100% no-repeat;
}
```
FILE: script.js
```js
const NS = "http://www.w3.org/2000/svg";

function add(parent, tag, attrs, text) {
  const el = document.createElementNS(NS, tag);
  for (const key in attrs) el.setAttribute(key, attrs[key]);
  if (text) el.textContent = text;
  document.getElementById(parent).appendChild(el);
}

const left = 7, right = 1547, step = 44.6;
// pixel centres keep the thin lines sharp
const barX = i => Math.round(left + i * step) + 0.5;
const priceY = p => Math.round(104 + (94 - p) * 43.4) - 0.5;

// CANDLES: high, body top, body bottom, low, down
const candles = [
  [667, 667, 717, 748], [633, 651, 663, 684], [567, 570, 653, 659],
  [474, 479, 574, 577], [468, 471, 480, 503], [385, 441, 483, 514],
  [385, 403, 435, 474], [398, 402, 438, 459, 1], [392, 416, 446, 468],
  [382, 420, 431, 443], [333, 353, 420, 424], [322, 356, 356, 380],
  [276, 277, 361, 364], [254, 264, 282, 339], [222, 245, 274, 286],
  [180, 239, 250, 270, 1], [242, 257, 317, 332, 1], [248, 307, 324, 360],
  [239, 280, 303, 325], [264, 272, 302, 339, 1], [270, 275, 311, 378],
  [137, 156, 279, 279], [106, 153, 240, 254, 1], [187, 244, 278, 302, 1],
  [240, 273, 367, 382, 1], [315, 342, 379, 413], [343, 351, 538, 548, 1]
];

candles.forEach(([high, top, bottom, low, down], i) => {
  const x = barX(i);
  if (top === bottom) {
    add("candles", "path", { class: "doji", d: `M${x} ${high}V${low}M${x - 17} ${top - 0.5}h34` });
    return;
  }
  const x1 = Math.max(x - 17, left - 0.5);
  add("candles", "path", { class: "candle", d: `M${x} ${high}V${low}` });
  add("candles", "rect", { class: "candle " + (down ? "down" : "up"), x: x1, y: top + 0.5, width: x + 17 - x1, height: bottom - top });
});

// SELL ZONE
add("zone", "rect", { class: "zone", x: 1006, y: 164, width: right - 1006, height: 34 });

// LEVELS
[218, 241].forEach(y => add("levels", "path", { class: "line order-line", d: `M${left + 1} ${y + 0.5}H${right}` }));

const levels = [
  [95, "stop loss 94.21"], [106, "0.0"], [141, "23.6"], [163, "38.2"], [198, "61.8"], [255, "100.0"],
  [292, "TP 1 89.67"], [382, "TP 2 87.58"], [495, "TP 3 84.99"], [588, "TP 4 82.84"], [735, "423.6"]
];
levels.forEach(([y, label]) => {
  add("levels", "path", { class: "line", d: `M988 ${y + 0.5}H${right}` });
  add("levels", "text", { class: "end", x: label.startsWith("TP") ? 1548 : 1545, y: y - 4 }, label);
});

// PRICE AXIS
["94.00", "92.95", "91.85", "90.75", "89.70", "88.60", "87.55", "86.45", "85.40", "84.30", "83.25", "82.15", "81.05", "80.00", "78.90"].forEach(p => {
  const y = priceY(p);
  add("axis", "path", { class: "tick", d: `M${right} ${y}h4` });
  add("axis", "text", { x: 1554, y: y + 5 }, p);
});
add("axis", "rect", { x: 1551, y: 531, width: 41, height: 15 });
add("axis", "text", { class: "price-now", x: 1554, y: 543 }, "83.99");

// DATE AXIS
["29 Aug", "31 Aug", "4 Sep", "6 Sep", "8 Sep", "12 Sep", "14 Sep", "18 Sep", "20 Sep", "22 Sep", "26 Sep", "28 Sep", "2 Oct", "4 Oct"].forEach((d, i) => {
  const x = barX(i * 2);
  add("axis", "path", { class: "tick", d: `M${x} 764v5` });
  add("axis", "text", { x: x - 3, y: 781 }, d + " 2023");
});

// CONNECTION BARS
for (let i = 0; i < 10; i++) {
  const h = 5 + i;
  add("bars", "rect", { x: i * 3, y: 1, width: 2, height: 17 - h, fill: "#7d8f1e" });
  add("bars", "rect", { x: i * 3, y: 19 - h, width: 2, height: h, fill: "#10466e" });
}

// PHOTOS ICON
["#f5912a", "#f3c51c", "#a9cf3a", "#4fb98a", "#4c9be0", "#8f72c8", "#d864a2", "#ee5a44"].forEach((c, i) => {
  add("petals", "rect", { x: 15.5, y: 3, width: 11, height: 17, rx: 5.5, fill: c, transform: `rotate(${i * 45} 21 21)` });
});
```
